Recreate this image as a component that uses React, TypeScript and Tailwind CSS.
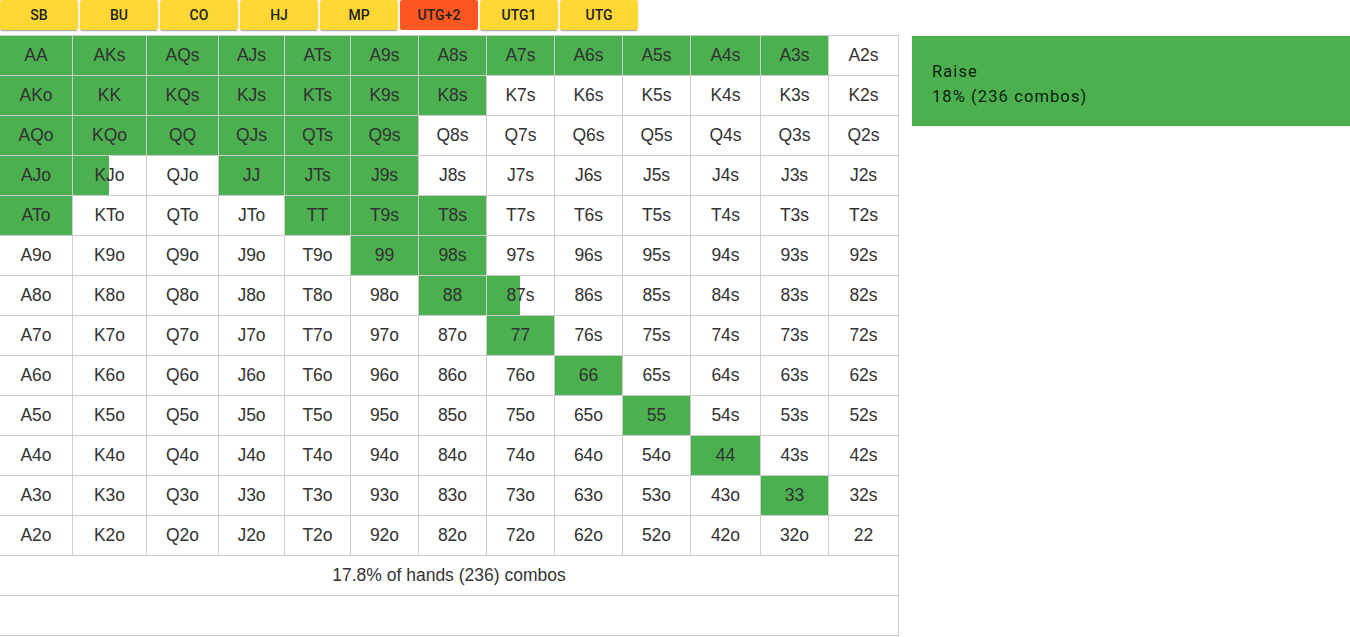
import React from "react";

const ranks = ["A", "K", "Q", "J", "T", "9", "8", "7", "6", "5", "4", "3", "2"];
const colW = [
  "w-[73px]", "w-[74px]", "w-[72px]", "w-[66px]", "w-[66px]", "w-[68px]", "w-[68px]",
  "w-[68px]", "w-[68px]", "w-[68px]", "w-[70px]", "w-[68px]", "w-[70px]",
];

// fill: 0 none, 1 full, 2 half
const fills: number[][] = [
  [1, 1, 1, 1, 1, 1, 1, 1, 1, 1, 1, 1, 0],
  [1, 1, 1, 1, 1, 1, 1, 0, 0, 0, 0, 0, 0],
  [1, 1, 1, 1, 1, 1, 0, 0, 0, 0, 0, 0, 0],
  [1, 2, 0, 1, 1, 1, 0, 0, 0, 0, 0, 0, 0],
  [1, 0, 0, 0, 1, 1, 1, 0, 0, 0, 0, 0, 0],
  [0, 0, 0, 0, 0, 1, 1, 0, 0, 0, 0, 0, 0],
  [0, 0, 0, 0, 0, 0, 1, 2, 0, 0, 0, 0, 0],
  [0, 0, 0, 0, 0, 0, 0, 1, 0, 0, 0, 0, 0],
  [0, 0, 0, 0, 0, 0, 0, 0, 1, 0, 0, 0, 0],
  [0, 0, 0, 0, 0, 0, 0, 0, 0, 1, 0, 0, 0],
  [0, 0, 0, 0, 0, 0, 0, 0, 0, 0, 1, 0, 0],
  [0, 0, 0, 0, 0, 0, 0, 0, 0, 0, 0, 1, 0],
  [0, 0, 0, 0, 0, 0, 0, 0, 0, 0, 0, 0, 0],
];

function label(r: number, c: number) {
  if (r === c) return ranks[r] + ranks[c];
  if (c > r) return ranks[r] + ranks[c] + "s";
  return ranks[c] + ranks[r] + "o";
}

const tabs = ["SB", "BU", "CO", "HJ", "MP", "UTG+2", "UTG1", "UTG"];

export default function App() {
  return (
    <div className="w-[1350px] h-[637px] bg-white overflow-hidden" style={{ fontFamily: '"Liberation Sans", Arial, sans-serif' }}>
      <div className="flex gap-[2px] h-[30px]">
        {tabs.map((t) => {
          const sel = t === "UTG+2";
          return (
            <div
              key={t}
              className={
                "w-[78px] h-[30px] flex items-center justify-center text-[14px] font-medium text-[#222] rounded-[2px] " +
                (sel
                  ? "bg-[#ff5722]"
                  : "bg-[#fdd835] shadow-[0_2px_1px_-1px_rgba(0,0,0,0.25),0_1px_2px_0_rgba(0,0,0,0.18)]")
              }
              style={{ fontFamily: 'Roboto, "Liberation Sans", sans-serif' }}
            >
              {t}
            </div>
          );
        })}
      </div>
      <div className="flex mt-[5px] items-start">
        <div className="w-[899px] border-t border-[#cccccc] text-[17.5px] text-[#333333]">
          {ranks.map((_, r) => (
            <div key={r} className="flex h-[40px]">
              {ranks.map((__, c) => {
                const f = fills[r][c];
                const bg =
                  f === 1
                    ? "bg-[#4caf50]"
                    : f === 2
                    ? "bg-[linear-gradient(to_right,#4caf50_50%,#ffffff_50%)]"
                    : "bg-white";
                return (
                  <div
                    key={c}
                    className={`${colW[c]} h-[40px] shrink-0 border-r border-b border-[#cccccc] flex items-center justify-center ${bg}`}
                  >
                    {label(r, c)}
                  </div>
                );
              })}
            </div>
          ))}
          <div className="h-[40px] border-r border-b border-[#cccccc] flex items-center justify-center">
            17.8% of hands (236) combos
          </div>
          <div className="h-[40px] border-r border-b border-[#cccccc]"></div>
        </div>
        <div
          className="flex-1 ml-[13px] mt-px bg-[#4caf50] pl-5 pt-[23px] pb-[17px] text-[16.5px] leading-[25px] tracking-[1.1px] text-black/85"
          style={{ fontFamily: 'Roboto, "Liberation Sans", sans-serif' }}
        >
          <div>Raise</div>
          <div>18% (236 combos)</div>
        </div>
      </div>
    </div>
  );
}
